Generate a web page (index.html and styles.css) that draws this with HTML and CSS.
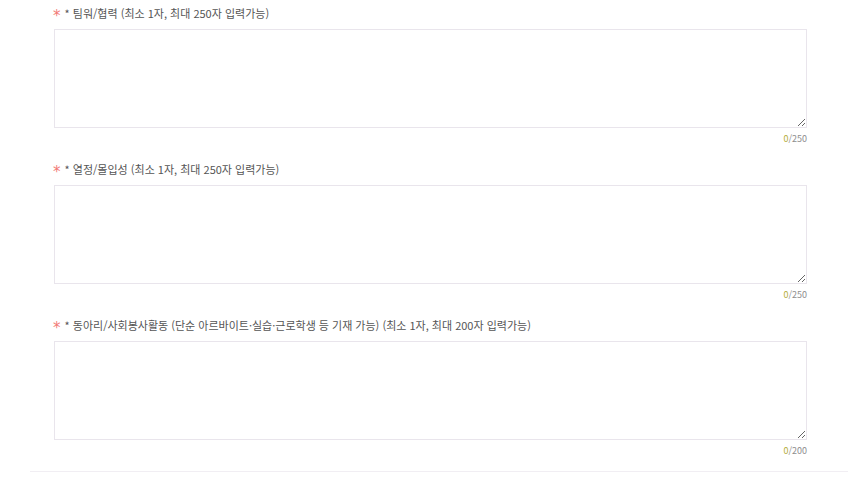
FILE: index.html
```html
<!DOCTYPE html>
<html lang="ko">
<head>
<meta charset="utf-8">
<link rel="stylesheet" href="styles.css">
</head>
<body>
<div class="form">
  <div class="fields">
    <div class="field">
      <label class="label"><span class="req">*</span> * 팀워/협력 (최소 1자, 최대 250자 입력가능)</label>
      <textarea class="input"></textarea>
      <div class="count"><span class="cur">0</span>/250</div>
    </div>
    <div class="field">
      <label class="label"><span class="req">*</span> * 열정/몰입성 (최소 1자, 최대 250자 입력가능)</label>
      <textarea class="input"></textarea>
      <div class="count"><span class="cur">0</span>/250</div>
    </div>
    <div class="field">
      <label class="label"><span class="req">*</span> * 동아리/사회봉사활동 (단순 아르바이트·실습·근로학생 등 기재 가능) (최소 1자, 최대 200자 입력가능)</label>
      <textarea class="input"></textarea>
      <div class="count"><span class="cur">0</span>/200</div>
    </div>
  </div>
  <div class="divider"></div>
</div>
</body>
</html>
```
FILE: styles.css
```css
html, body {
  margin: 0;
  padding: 0;
  background: #ffffff;
}
body {
  font-family: "Noto Sans CJK KR", "Noto Sans", sans-serif;
  color: #555555;
}
.form {
  margin-left: 30px;
  width: 818px;
  padding-top: 4px;
}
.fields {
  padding: 0 41px 0 24px;
}
.field {
  display: flex;
  flex-direction: column;
  margin-bottom: 14px;
}
.field:last-child {
  margin-bottom: 13px;
}
.label {
  display: block;
  font-size: 11px;
  line-height: 18px;
  height: 18px;
  margin-bottom: 7px;
  color: #555555;
  white-space: nowrap;
}
.req {
  display: inline-block;
  color: #f27a76;
  font-family: "DejaVu Sans", sans-serif;
  font-size: 15px;
  line-height: 18px;
  height: 18px;
  vertical-align: -3px;
  margin-left: -1px;
  margin-right: 1px;
}
.input {
  display: block;
  box-sizing: border-box;
  width: 100%;
  height: 99px;
  margin: 0;
  border: 1px solid #e9e5ec;
  background: #ffffff;
  padding: 8px;
  font-family: inherit;
  font-size: 12px;
  outline: none;
}
.count {
  margin-top: 4px;
  font-size: 9px;
  line-height: 14px;
  height: 14px;
  text-align: right;
  color: #8e8e8e;
}
.cur {
  color: #b5ad3a;
}
.divider {
  height: 1px;
  background: #f1eef3;
}
```
